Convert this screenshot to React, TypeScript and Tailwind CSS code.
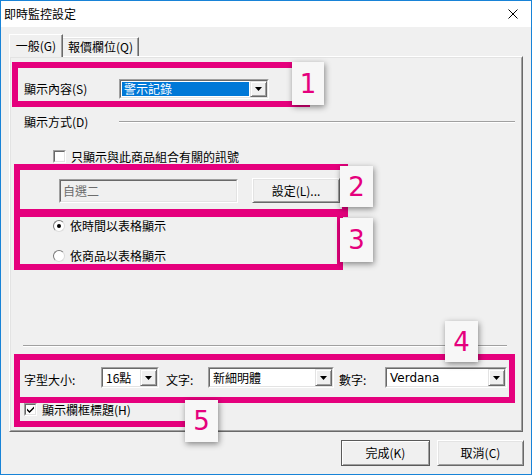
import React from "react";

type BoxProps = { className?: string; children?: React.ReactNode };

function Arrow() {
  return (
    <svg width="7" height="4" viewBox="0 0 7 4">
      <path d="M0 0h7L3.5 4z" fill="#000" />
    </svg>
  );
}

function Combo({
  className,
  text,
  selected,
  textClass,
}: BoxProps & { text: string; selected?: boolean; textClass?: string }) {
  return (
    <div className={`flex border border-t-[#a0a0a0] border-l-[#a0a0a0] border-r-white border-b-white ${className ?? ""}`}>
      <div className="flex flex-1 border border-t-[#696969] border-l-[#696969] border-r-[#e3e3e3] border-b-[#e3e3e3] bg-white">
        <div className="flex flex-1 p-px">
          <div
            className={`flex flex-1 items-center pl-[2px] text-[12px] leading-none ${
              selected ? "bg-[#0078d7] text-white" : "text-black"
            } ${textClass ?? ""}`}
          >
            {text}
          </div>
        </div>
        <div className="flex w-[17px] items-center justify-center border border-t-[#e3e3e3] border-l-[#e3e3e3] border-r-[#696969] border-b-[#696969] bg-[#f0f0f0] shadow-[inset_1px_1px_0_#fff,inset_-1px_-1px_0_#a0a0a0]">
          <Arrow />
        </div>
      </div>
    </div>
  );
}

function Checkbox({ checked }: { checked?: boolean }) {
  return (
    <div className="flex h-[13px] w-[13px] border border-t-[#a0a0a0] border-l-[#a0a0a0] border-r-white border-b-white">
      <div className="flex flex-1 items-center justify-center border border-t-[#696969] border-l-[#696969] border-r-[#e3e3e3] border-b-[#e3e3e3] bg-white">
        {checked && (
          <svg width="7" height="7" viewBox="0 0 7 7">
            <path d="M0 2.5l2.5 2.5L7 0.5v2L2.5 7 0 4.5z" fill="#000" />
          </svg>
        )}
      </div>
    </div>
  );
}

function Radio({ checked }: { checked?: boolean }) {
  return (
    <div className="flex h-[12px] w-[12px] items-center justify-center rounded-full border border-t-[#7a7a7a] border-l-[#7a7a7a] border-r-[#dcdcdc] border-b-[#dcdcdc] bg-white">
      {checked && <div className="h-[4px] w-[4px] rounded-full bg-black" />}
    </div>
  );
}

function Etched({ className }: BoxProps) {
  return <div className={`h-[2px] border-t border-t-[#a0a0a0] border-b border-b-white ${className ?? ""}`} />;
}

function Btn({ className, children, primary }: BoxProps & { primary?: boolean }) {
  return (
    <div
      className={`flex items-center justify-center bg-[#f0f0f0] text-[12px] leading-none text-black ${
        primary
          ? "border border-[#5a5a5a] shadow-[inset_1px_1px_0_#fff,inset_-1px_-1px_0_#a0a0a0]"
          : "border border-t-white border-l-white border-r-[#696969] border-b-[#696969] shadow-[inset_1px_1px_0_#e3e3e3,inset_-1px_-1px_0_#a0a0a0]"
      } ${className ?? ""}`}
    >
      {children}
    </div>
  );
}

function Tag({ className, n }: BoxProps & { n: string }) {
  return (
    <div
      className={`absolute flex items-center justify-center bg-[#f7f7f7] font-['DejaVu_Sans',sans-serif] text-[26px] leading-none text-[#e5007d] shadow-[1px_2px_6px_rgba(0,0,0,0.45)] ${className ?? ""}`}
    >
      {n}
    </div>
  );
}

export default function App() {
  return (
    <div className="relative flex h-[475px] w-[532px] flex-col overflow-hidden border border-[#1883d7] bg-[#f0f0f0] font-['Noto_Sans_CJK_TC','Liberation_Sans',sans-serif] text-black">
      {/* title bar */}
      <div className="flex h-[26px] items-center justify-between bg-white pl-[3px] pr-[13px]">
        <span className="text-[12px] leading-none">即時監控設定</span>
        <svg width="10" height="10" viewBox="0 0 10 10">
          <path d="M0.5 0.5l9 9M9.5 0.5l-9 9" stroke="#000" strokeWidth="1" />
        </svg>
      </div>

      {/* tabs */}
      <div className="ml-[8px] mt-[7px] flex h-[22px] items-end">
        <div className="relative z-10 -mb-px flex h-[23px] w-[54px] items-center justify-center border border-b-0 border-t-white border-l-white border-r-[#696969] bg-[#f0f0f0] text-[12px] leading-none shadow-[inset_-1px_0_0_#a0a0a0]">
          一般(G)
        </div>
        <div className="flex h-[19px] w-[76px] items-center justify-center border border-b-0 border-t-white border-l-0 border-r-[#696969] text-[12px] leading-none shadow-[inset_-1px_0_0_#a0a0a0,inset_0_1px_0_#e3e3e3]">
          報價欄位(Q)
        </div>
      </div>

      {/* panel */}
      <div className="ml-[8px] flex h-[376px] w-[514px] border border-t-white border-l-white border-r-[#696969] border-b-[#696969]">
        <div className="flex flex-1 flex-col border border-t-[#e3e3e3] border-l-[#e3e3e3] border-r-[#a0a0a0] border-b-[#a0a0a0] text-[12px] leading-none">
          <div className="ml-[13px] mt-[21px] flex h-[20px] items-center">
            <span className="w-[95px]">顯示內容(S)</span>
            <Combo className="h-[20px] w-[150px]" text="警示記錄" selected />
          </div>

          <div className="ml-[13px] mt-[15px] flex h-[16px] items-center">
            <span className="w-[95px]">顯示方式(D)</span>
            <Etched className="w-[396px]" />
          </div>

          <div className="ml-[42px] mt-[20px] flex h-[13px] items-center gap-[5px]">
            <Checkbox />
            <span>只顯示與此商品組合有關的訊號</span>
          </div>

          <div className="ml-[48px] mt-[15px] flex h-[25px] items-center gap-[14px]">
            <div className="flex h-[24px] w-[179px] items-center border border-t-[#a0a0a0] border-l-[#a0a0a0] border-r-white border-b-white">
              <div className="flex h-full flex-1 items-center border border-t-[#696969] border-l-[#696969] border-r-[#e3e3e3] border-b-[#e3e3e3] pl-[2px] text-[#6d6d6d]">
                自選二
              </div>
            </div>
            <Btn className="h-[25px] w-[88px]">設定(L)...</Btn>
          </div>

          <div className="ml-[42px] mt-[16px] flex h-[14px] items-center gap-[5px]">
            <Radio checked />
            <span>依時間以表格顯示</span>
          </div>

          <div className="ml-[42px] mt-[16px] flex h-[14px] items-center gap-[5px]">
            <Radio />
            <span>依商品以表格顯示</span>
          </div>

          <Etched className="ml-[12px] mt-[82px] w-[484px]" />

          <div className="ml-[13px] mt-[20px] flex h-[21px] items-center">
            <span className="w-[77px] pt-[5px]">字型大小:</span>
            <Combo className="h-[21px] w-[58px]" text="16點" />
            <span className="ml-[7px] w-[42px] pt-[5px]">文字:</span>
            <Combo className="h-[21px] w-[126px]" text="新細明體" />
            <span className="ml-[5px] w-[46px] pt-[5px]">數字:</span>
            <Combo className="h-[21px] w-[122px]" text="Verdana" textClass="font-['DejaVu_Sans',sans-serif] text-[12px]" />
          </div>

          <div className="ml-[13px] mt-[15px] flex h-[13px] items-center gap-[5px]">
            <Checkbox checked />
            <span>顯示欄框標題(H)</span>
          </div>
        </div>
      </div>

      {/* footer buttons */}
      <div className="mt-[8px] flex justify-end gap-[7px] pr-[7px]">
        <Btn primary className="h-[26px] w-[89px]">完成(K)</Btn>
        <Btn className="h-[26px] w-[87px]">取消(C)</Btn>
      </div>

      {/* annotation frames */}
      <div className="absolute left-[11px] top-[61px] h-[45px] w-[298px] border-[6px] border-[#e5007d]" />
      <div className="absolute left-[13px] top-[163px] h-[53px] w-[334px] border-[6px] border-[#e5007d]" />
      <div className="absolute left-[13px] top-[208px] h-[61px] w-[329px] border-[6px] border-[#e5007d]" />
      <div className="absolute left-[13px] top-[353px] h-[49px] w-[501px] border-[6px] border-[#e5007d]" />
      <div className="absolute left-[13px] top-[396px] h-[30px] w-[186px] border-[6px] border-[#e5007d]" />

      <Tag className="left-[291px] top-[61px] h-[43px] w-[32px]" n="1" />
      <Tag className="left-[339px] top-[165px] h-[41px] w-[33px]" n="2" />
      <Tag className="left-[339px] top-[217px] h-[44px] w-[33px]" n="3" />
      <Tag className="left-[444px] top-[320px] h-[41px] w-[33px]" n="4" />
      <Tag className="left-[184px] top-[399px] h-[42px] w-[33px]" n="5" />
    </div>
  );
}
